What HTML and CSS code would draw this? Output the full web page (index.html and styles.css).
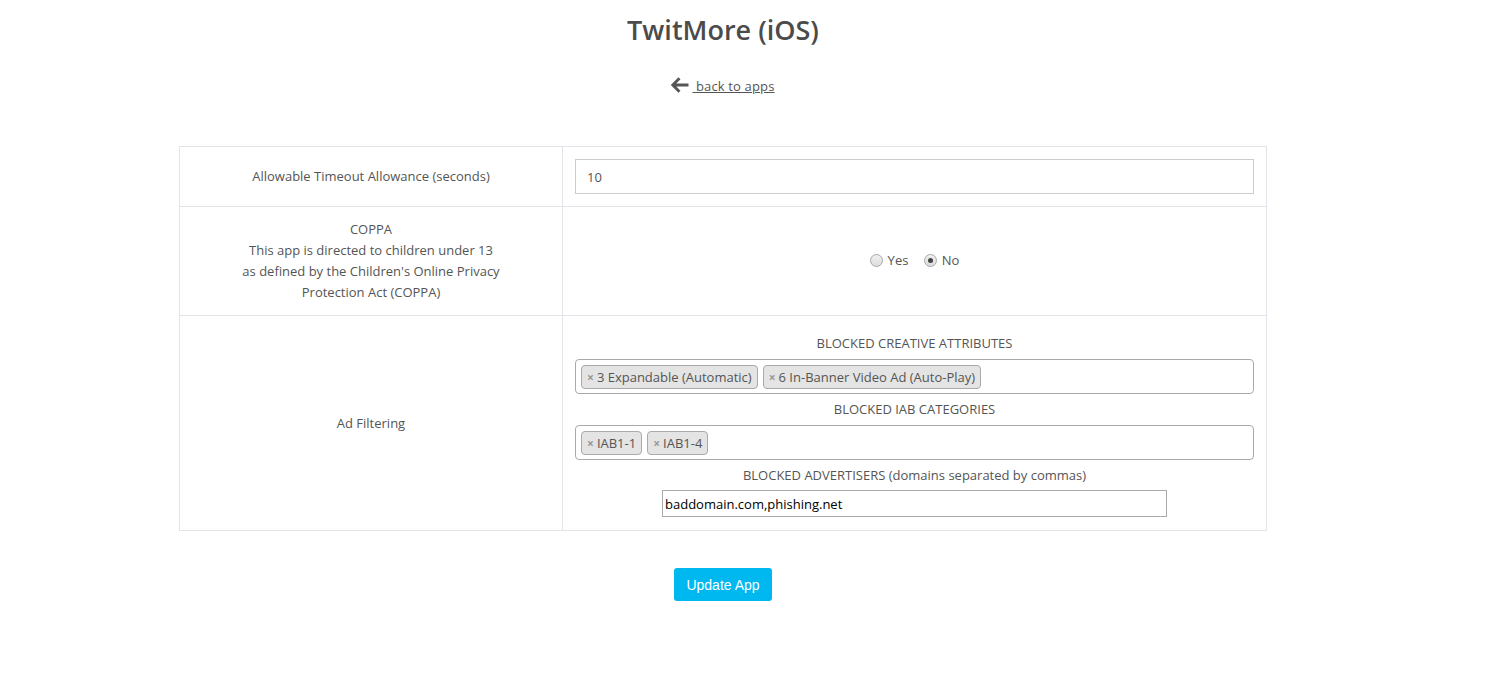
FILE: index.html
```html
<!DOCTYPE html>
<html>
<head>
<meta charset="utf-8">
<link rel="stylesheet" href="styles.css">
</head>
<body>
<div class="page">
  <h1 class="title">TwitMore (iOS)</h1>
  <div class="back">
    <a class="back-link" href="#"><svg class="arrow" viewBox="0 0 18 16" width="18" height="16"><path d="M8.5 1.2 L1.8 8 L8.5 14.8 M2.3 8 H17.5" fill="none" stroke="#555" stroke-width="2.8" stroke-linejoin="miter" stroke-linecap="butt"/></svg> back to apps</a>
  </div>
  <table class="settings">
    <tr class="row-timeout">
      <td class="label">Allowable Timeout Allowance (seconds)</td>
      <td class="value"><input class="text-input" type="text" value="10"></td>
    </tr>
    <tr class="row-coppa">
      <td class="label coppa">COPPA<br>This app is directed to children under 13<br>as defined by the Children's Online Privacy<br>Protection Act (COPPA)</td>
      <td class="value center">
        <label class="radio"><span class="radio-dot"></span>Yes</label>
        <label class="radio"><span class="radio-dot checked"></span>No</label>
      </td>
    </tr>
    <tr class="row-filter">
      <td class="label">Ad Filtering</td>
      <td class="value center">
        <div class="section-title">BLOCKED CREATIVE ATTRIBUTES</div>
        <div class="tagbox">
          <span class="tag"><span class="x">×</span>3 Expandable (Automatic)</span>
          <span class="tag"><span class="x">×</span>6 In-Banner Video Ad (Auto-Play)</span>
        </div>
        <div class="section-title">BLOCKED IAB CATEGORIES</div>
        <div class="tagbox">
          <span class="tag"><span class="x">×</span>IAB1-1</span>
          <span class="tag"><span class="x">×</span>IAB1-4</span>
        </div>
        <div class="section-title adv">BLOCKED ADVERTISERS (domains separated by commas)</div>
        <input class="domains" type="text" value="baddomain.com,phishing.net">
      </td>
    </tr>
  </table>
  <div class="actions"><button class="btn">Update App</button></div>
</div>
</body>
</html>
```
FILE: styles.css
```css
html, body {
  margin: 0;
  padding: 0;
  background: #fff;
}
body {
  font-family: "Open Sans", "DejaVu Sans", sans-serif;
  font-size: 13px;
  color: #555;
}
.page {
  width: 1446px;
  padding-top: 12px;
}
.title {
  margin: 0;
  text-align: center;
  font-size: 27px;
  font-weight: 600;
  color: #4b4b4b;
  line-height: 36px;
}
.back {
  text-align: center;
  margin-top: 28px;
  line-height: 20px;
}
.back-link {
  color: #555;
  text-decoration: underline;
  font-size: 13px;
  letter-spacing: 0.15px;
}
.arrow {
  vertical-align: -2px;
  margin-right: 3px;
}
.settings {
  margin: 50px auto 0;
  width: 1088px;
  border-collapse: collapse;
}
.settings td {
  border: 1px solid #e3e3ea;
  padding: 12px;
  vertical-align: middle;
}
.label {
  width: 358px;
  text-align: center;
  line-height: 21px;
}
.coppa {
  padding-top: 14px;
  padding-bottom: 10px;
}
.row-timeout td {
  height: 35px;
}
.row-coppa td {
  height: 84px;
}
.center {
  text-align: center;
}
.text-input {
  display: block;
  box-sizing: border-box;
  width: 100%;
  height: 35px;
  border: 1px solid #ccc;
  padding: 0 11px;
  font-family: "Open Sans", sans-serif;
  font-size: 13px;
  color: #555;
  margin: 0;
}
.radio {
  display: inline-flex;
  align-items: center;
  margin: 0 6px;
  line-height: 18px;
}
.radio-dot {
  width: 11px;
  height: 11px;
  border: 1px solid #a9a9a9;
  border-radius: 50%;
  background: linear-gradient(#f0f0f0, #dcdcdc);
  margin-right: 5px;
  position: relative;
}
.radio-dot.checked::after {
  content: "";
  position: absolute;
  left: 3px;
  top: 3px;
  width: 5px;
  height: 5px;
  border-radius: 50%;
  background: #444;
}
.row-filter td.value {
  padding-top: 18px;
  padding-bottom: 13px;
}
.section-title {
  line-height: 18px;
  margin-bottom: 7px;
}
.section-title.adv {
  margin-bottom: 6px;
}
.tagbox {
  box-sizing: border-box;
  height: 35px;
  border: 1px solid #aaa;
  border-radius: 4px;
  padding: 5px 5px;
  display: flex;
  gap: 5px;
  text-align: left;
  margin-bottom: 6px;
}
.tag {
  box-sizing: border-box;
  height: 24px;
  line-height: 22px;
  background: #e4e4e4;
  border: 1px solid #aaa;
  border-radius: 4px;
  padding: 0 5px 0 5px;
  font-size: 13px;
  color: #555;
}
.x {
  color: #999;
  font-weight: bold;
  font-size: 12px;
  margin-right: 3px;
}
.domains {
  display: block;
  margin: 0 auto;
  box-sizing: border-box;
  width: 505px;
  height: 27px;
  border: 1px solid #aaa;
  padding: 0 2px;
  font-family: "Open Sans", sans-serif;
  font-size: 13px;
  color: #000;
}
.actions {
  text-align: center;
  margin-top: 37px;
}
.btn {
  background: #00b8f0;
  color: #fff;
  border: none;
  border-radius: 3px;
  width: 98px;
  height: 33px;
  font-family: "Liberation Sans", Arial, sans-serif;
  font-size: 14px;
  padding: 0;
}
```
